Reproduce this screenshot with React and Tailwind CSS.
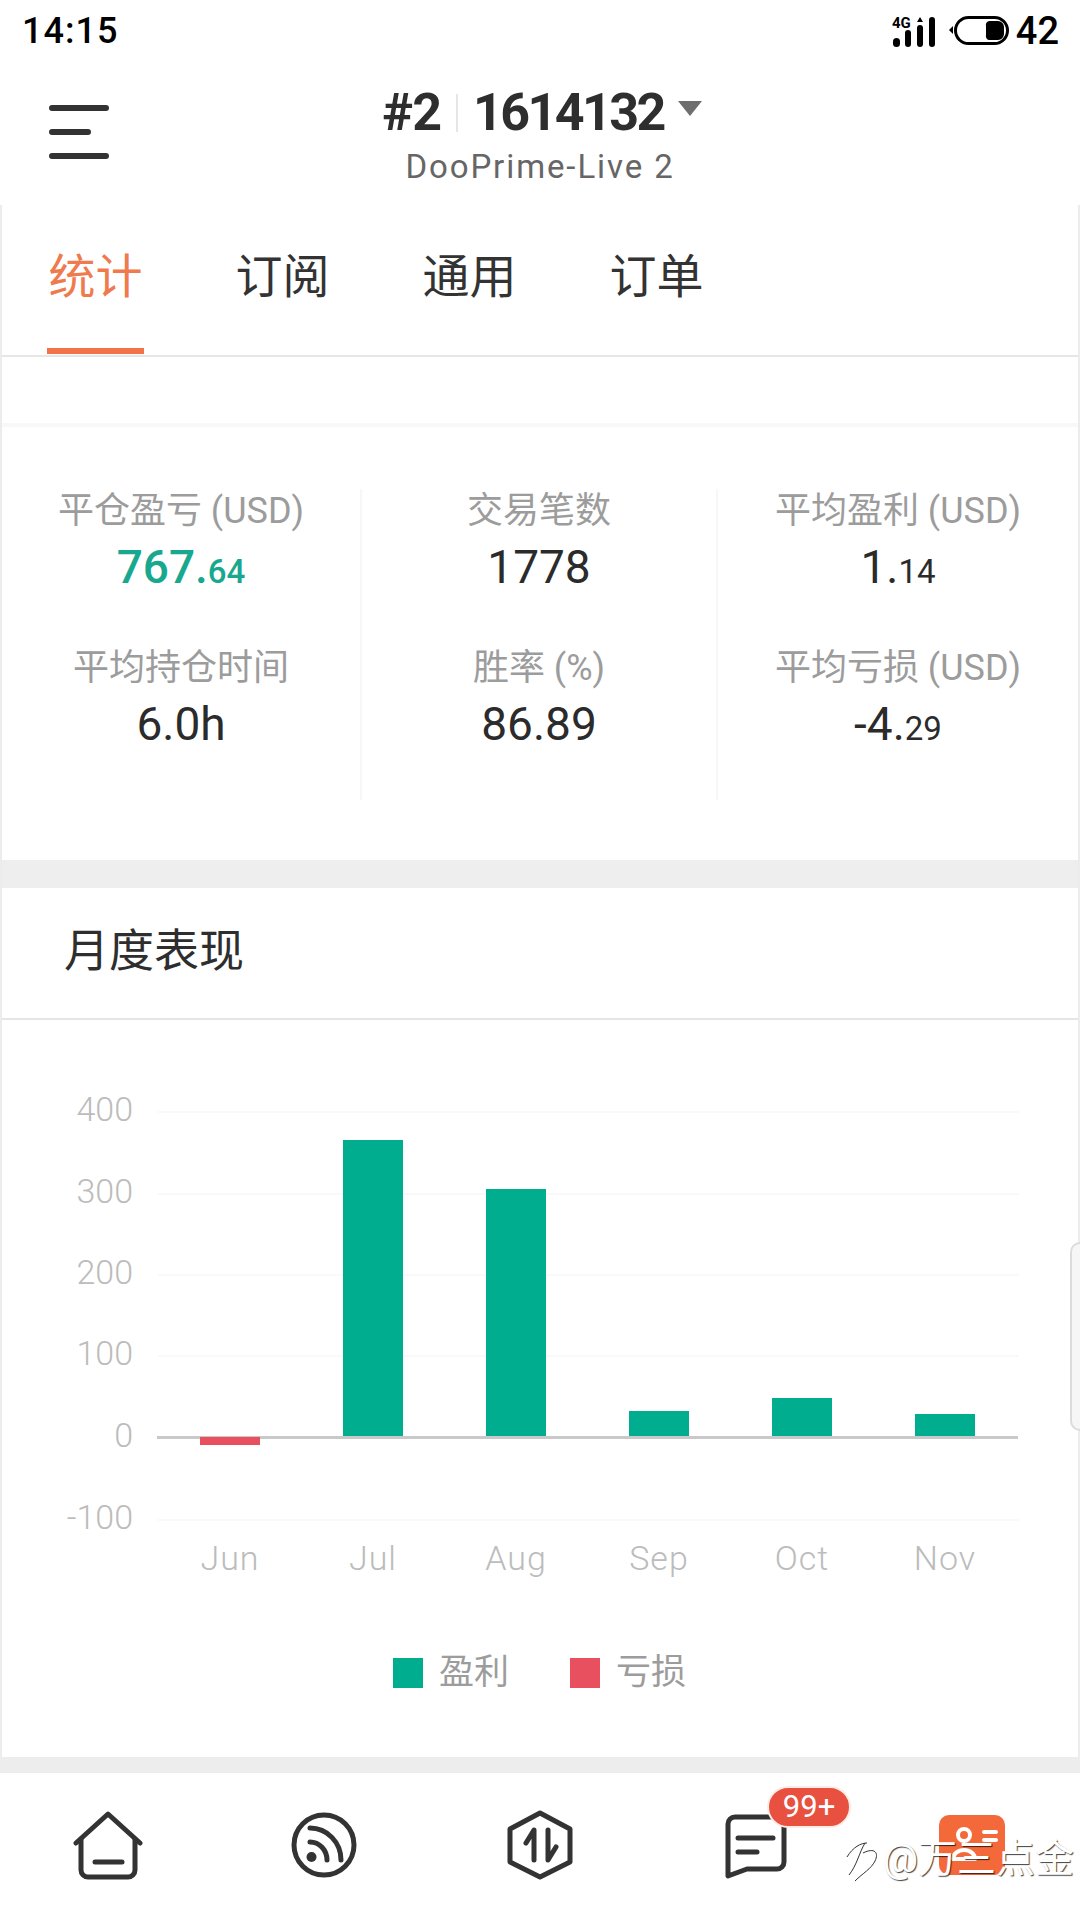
const stats = [
  [
    { label: "平仓盈亏 (USD)", int: "767.", dec: "64", color: "text-[#17a88f]", bold: true },
    { label: "平均持仓时间", int: "6.0h", dec: "" },
  ],
  [
    { label: "交易笔数", int: "1778", dec: "" },
    { label: "胜率 (%)", int: "86.89", dec: "" },
  ],
  [
    { label: "平均盈利 (USD)", int: "1.", dec: "14" },
    { label: "平均亏损 (USD)", int: "-4.", dec: "29" },
  ],
];

const colClass = ["w-[360px] border-r-2 border-[#f7f7f7]", "w-[356px] border-r-2 border-[#f7f7f7]", "flex-1"];

const ticks = [
  ["400", 1112],
  ["300", 1194],
  ["200", 1275],
  ["100", 1356],
  ["-100", 1520],
];
const bars = [
  ["Jul", 343, 1140],
  ["Aug", 486, 1189],
  ["Sep", 629, 1411],
  ["Oct", 772, 1398],
  ["Nov", 915, 1414],
];

function StatusBar() {
  return (
    <div className="flex h-[62px] items-center justify-between pl-[22px] pr-[21px] text-black">
      <span className="text-[36px] font-medium leading-none tracking-[1px]">14:15</span>
      <div className="flex items-center">
        <svg width="44" height="34" viewBox="0 0 44 34" className="mr-[13px]">
          <text x="0" y="14" fontSize="15" fontWeight="700" fill="#000">4G</text>
          <rect x="1" y="24" width="7" height="9" rx="3.5" fill="#000" />
          <rect x="13" y="16" width="6" height="17" rx="3" fill="#000" />
          <rect x="25" y="11" width="6" height="22" rx="3" fill="#000" />
          <path d="M25 8 L28 3 L31 8 Z" fill="#000" />
          <rect x="37" y="3" width="6" height="30" rx="3" fill="#000" />
        </svg>
        <svg width="60" height="30" viewBox="0 0 60 30" className="mr-[7px]">
          <rect x="6.5" y="1.5" width="52" height="26" rx="13" fill="none" stroke="#000" strokeWidth="3" />
          <path d="M0 14 L4 10 V18 Z" fill="#000" />
          <path d="M40 5 H49 a6 6 0 0 1 6 6 V18 a6 6 0 0 1 -6 6 H40 a4 4 0 0 1 -3 -5 V10 a4 4 0 0 1 3 -5 Z" fill="#000" />
        </svg>
        <span className="text-[38px] font-medium leading-none">42</span>
      </div>
    </div>
  );
}

function Header() {
  return (
    <div className="flex h-[143px] items-start pl-[49px] pr-[50px]">
      <div className="mt-[43px] flex w-[60px] flex-col gap-[18px]">
        <div className="h-[6px] w-[60px] rounded-full bg-[#333333]" />
        <div className="h-[6px] w-[42px] rounded-full bg-[#333333]" />
        <div className="h-[6px] w-[60px] rounded-full bg-[#333333]" />
      </div>
      <div className="flex flex-1 flex-col items-center">
        <div className="ml-[4px] mt-[24px] flex h-[54px] items-center text-[52px] font-bold leading-none text-[#2e2e2e]">
          <span className="tracking-[-1px]">#2</span>
          <span className="mx-[15px] h-[38px] w-[2px] bg-[#e6e6e6]" />
          <span className="tracking-[-2.6px]">1614132</span>
          <svg width="24" height="15" viewBox="0 0 24 15" className="mb-[10px] ml-[14px]">
            <path d="M0 0 H24 L12 15 Z" fill="#6e6e6e" />
          </svg>
        </div>
        <div className="mt-[7px] text-[33px] leading-[40px] tracking-[1.9px] text-[#666666]">DooPrime-Live 2</div>
      </div>
      <div className="w-[59px]" />
    </div>
  );
}

function Tabs() {
  const tabs = ["统计", "订阅", "通用", "订单"];
  return (
    <div className="flex h-[152px] border-b-2 border-[#e6e6e6] pl-[45px]">
      {tabs.map((t, i) => (
        <div key={t} className="mr-[90px] flex w-[97px] flex-col items-center">
          <div className={`mt-[42px] text-[47px] leading-[60px] ${i === 0 ? "text-[#ef7a4d]" : "text-[#333333]"}`}>{t}</div>
          {i === 0 && <div className="mt-[41px] h-[6px] w-[97px] bg-[#f2734a]" />}
        </div>
      ))}
    </div>
  );
}

function Stats() {
  return (
    <div className="border-t-4 border-[#f8f8f8] h-[437px] pt-[62px]">
      <div className="flex h-[311px]">
        {stats.map((col, c) => (
          <div key={c} className={`flex flex-col items-center ${colClass[c]}`}>
            {col.map((s, r) => (
              <div key={r} className="mb-[52px] flex flex-col items-center">
                <div className="h-[44px] text-[36px] leading-[44px] text-[#9c9c9c]">{s.label}</div>
                <div className={`mt-[7px] flex h-[54px] items-baseline leading-[54px] ${s.color || "text-[#2b2b2b]"}`}>
                  <span className={`text-[46px] ${s.bold ? "font-medium" : "font-normal"}`}>{s.int}</span>
                  {s.dec && <span className={`text-[33px] ${s.bold ? "font-medium" : "font-normal"}`}>{s.dec}</span>}
                </div>
              </div>
            ))}
          </div>
        ))}
      </div>
    </div>
  );
}

function Chart() {
  return (
    <svg width="1076" height="737" viewBox="2 1020 1076 737" className="block">
      {ticks.map(([t, y]) => (
        <g key={t}>
          <line x1="158" x2="1019" y1={y} y2={y} stroke="#f9f9f9" strokeWidth="2" />
          <text x="133" y={y + 9} textAnchor="end" fontSize="34" fontWeight="300" fill="#bcbcbc">{t}</text>
        </g>
      ))}
      <text x="133" y="1447" textAnchor="end" fontSize="34" fontWeight="300" fill="#bcbcbc">0</text>
      {bars.map(([m, x, top]) => (
        <rect key={m} x={x} y={top} width="60" height={1437 - top} fill="#00ad8f" />
      ))}
      <line x1="157" x2="1018" y1="1437.5" y2="1437.5" stroke="#c9c9c9" strokeWidth="3" />
      <rect x="200" y="1437" width="60" height="8" fill="#e8505f" />
      {[["Jun", 230], ["Jul", 373], ["Aug", 516], ["Sep", 659], ["Oct", 802], ["Nov", 945]].map(([m, x]) => (
        <text key={m} x={x} y="1570" textAnchor="middle" fontSize="34" fontWeight="300" letterSpacing="1" fill="#bcbcbc">{m}</text>
      ))}
      <rect x="393" y="1658" width="30" height="30" fill="#00ad8f" />
      <text x="439" y="1684" fontSize="35" fill="#9c9c9c">盈利</text>
      <rect x="570" y="1658" width="30" height="30" fill="#e8505f" />
      <text x="616" y="1684" fontSize="35" fill="#9c9c9c">亏损</text>
    </svg>
  );
}

function NavIcon({ children }) {
  return (
    <svg width="70" height="70" viewBox="0 0 70 70" fill="none" stroke="#333333" strokeWidth="5" strokeLinecap="round" strokeLinejoin="round">
      {children}
    </svg>
  );
}

function BottomNav() {
  return (
    <div className="grid h-[145px] grid-cols-5 items-center justify-items-center pb-[2px]">
      <NavIcon>
        <path d="M3 33 L35 4 L67 33" />
        <path d="M8 29 V60 a7 7 0 0 0 7 7 H55 a7 7 0 0 0 7 -7 V29" />
        <path d="M22 52 H49" />
      </NavIcon>
      <NavIcon>
        <circle cx="35" cy="35" r="30" />
        <path d="M21 32 A17 18 0 0 1 38 50" />
        <path d="M21 18 A31 32 0 0 1 52 50" />
        <circle cx="22.5" cy="47" r="5" fill="#333333" stroke="none" />
      </NavIcon>
      <NavIcon>
        <path d="M35 3 L65 19 V52 L35 67 L5 52 V19 Z" />
        <path d="M29 50 V20 L21 33" />
        <path d="M43 20 V50 L51 37" />
      </NavIcon>
      <div className="relative">
        <NavIcon>
          <path d="M7 66 V14 a7 7 0 0 1 7 -7 H56 a7 7 0 0 1 7 7 V52 a7 7 0 0 1 -7 7 H26 Z" />
          <path d="M17 28 H52" />
          <path d="M17 42 H36" />
        </NavIcon>
        <div className="absolute left-[46px] top-[-24px] flex h-[42px] w-[84px] items-center justify-center rounded-full border-2 border-[#fdece6] bg-[#e8503f] text-[31px] leading-none text-white">
          99+
        </div>
      </div>
      <svg width="70" height="70" viewBox="0 0 70 70">
        <rect x="2" y="5" width="66" height="60" rx="10" fill="#f4693a" />
        <circle cx="27" cy="25" r="6" fill="none" stroke="#fff" strokeWidth="4" />
        <path d="M47 22 H59 M47 30 H59" stroke="#fff" strokeWidth="4" strokeLinecap="round" />
        <path d="M16 49 a11 9 0 0 1 22 0 Z" fill="none" stroke="#fff" strokeWidth="4" strokeLinejoin="round" />
      </svg>
    </div>
  );
}

export default function App() {
  return (
    <div className="relative h-[1920px] w-[1080px] overflow-hidden bg-white font-['Roboto','Noto_Sans_CJK_SC',sans-serif]">
      <StatusBar />
      <Header />
      <div className="border-x-2 border-[#ececec]">
        <Tabs />
        <div className="h-[66px]" />
        <Stats />
        <div className="h-[28px] bg-[#eeeeee]" />
        <div className="flex h-[132px] items-center border-b-2 border-[#e6e6e6] pb-[4px] pl-[62px] text-[45px] leading-none text-[#2e2e2e]">月度表现</div>
        <Chart />
      </div>
      <div className="h-[16px] bg-[#ededed]" />
      <BottomNav />
      <div className="absolute right-0 top-[1242px] h-[189px] w-[10px] rounded-l-[10px] border-y-2 border-l-2 border-[#dcdcdc] bg-[#f6f6f6]" />
      <div className="absolute left-[845px] top-[1835px] flex items-center text-[39px] leading-[48px] text-white [text-shadow:1px_1px_1px_rgba(0,0,0,0.75)]">
        <svg width="38" height="48" viewBox="0 0 38 48" fill="none" stroke="#333333" strokeWidth="1">
          <path d="M2 22 C8 12 16 8 22 8 M20 8 C14 18 12 30 4 40 M18 18 C30 12 34 18 30 26 C26 34 18 38 10 46" />
        </svg>
        <span>@万三点金</span>
      </div>
    </div>
  );
}
